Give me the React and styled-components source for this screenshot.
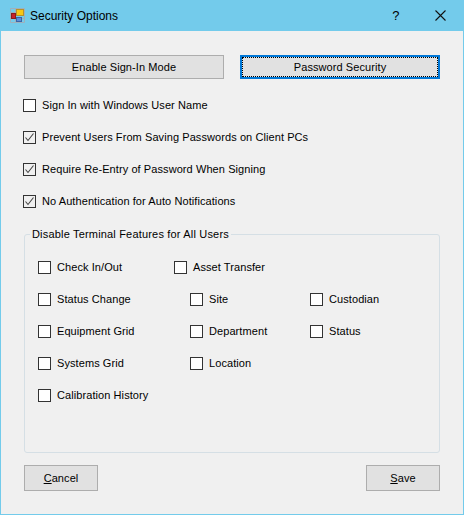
import React from "react";
import styled, { createGlobalStyle } from "styled-components";

const GlobalStyle = createGlobalStyle`
  html, body {
    margin: 0;
    padding: 0;
    background: #f0f0f0;
  }
  body {
    font-family: "Liberation Sans", Arial, sans-serif;
    font-size: 11px;
    letter-spacing: 0.08px;
    color: #000;
  }
`;

const Window = styled.div`
  width: 464px;
  height: 515px;
  box-sizing: border-box;
  border: 1px solid #73cbeb;
  border-top: 0;
  background: #f0f0f0;
  display: flex;
  flex-direction: column;
`;

const TitleBar = styled.div`
  height: 31px;
  flex: none;
  background: #73cbeb;
  display: flex;
  align-items: center;
  padding-left: 9px;
`;

const Title = styled.div`
  margin-left: 4px;
  flex: 1;
  font-size: 12px;
  letter-spacing: 0;
`;

const HelpGlyph = styled.div`
  width: 46px;
  margin-right: -2px;
  text-align: center;
  font-size: 13px;
`;

const CloseBtn = styled.div`
  width: 46px;
  height: 31px;
  display: flex;
  align-items: center;
  justify-content: center;
`;

const Content = styled.div`
  flex: 1;
  padding: 24px 23px 0 22px;
  display: flex;
  flex-direction: column;
`;

const TopButtons = styled.div`
  display: flex;
  gap: 16px;
  padding-left: 1px;
  margin-bottom: 18px;
`;

const Button = styled.div`
  box-sizing: border-box;
  width: ${(p) => p.$w}px;
  height: ${(p) => p.$h}px;
  background: #e1e1e1;
  border: 1px solid #adadad;
  display: flex;
  align-items: center;
  justify-content: center;
  ${(p) =>
    p.$focused &&
    `
    border: 2px solid #0078d7;
    outline: 1px dotted #000;
    outline-offset: -3px;
  `}
`;

const Key = styled.span`
  text-decoration: underline;
`;

const CheckList = styled.div`
  display: flex;
  flex-direction: column;
  gap: 16px;
`;

const CheckRow = styled.div`
  display: flex;
  align-items: center;
  height: 16px;
  white-space: nowrap;
  grid-column: ${(p) => p.$col || "auto"};
`;

const Box = styled.span`
  box-sizing: border-box;
  width: 13px;
  height: 13px;
  flex: none;
  margin-right: 6px;
  border: 1px solid #333;
  background: ${(p) => (p.$checked ? "#f0f0f0" : "#fff")};
  display: flex;
  align-items: center;
  justify-content: center;
`;

const Group = styled.fieldset`
  box-sizing: border-box;
  width: 416px;
  height: 226px;
  margin: 18px 0 0 1px;
  padding: 0 0 0 13px;
  border: 1px solid #d5dfe5;
  border-radius: 3px;
  min-width: 0;
`;

const Legend = styled.legend`
  margin-left: -8px;
  padding: 0 2px;
  line-height: 14px;
  letter-spacing: 0.18px;
`;

const FeatureGrid = styled.div`
  display: grid;
  grid-template-columns: 136px 16px 120px 1fr;
  row-gap: 16px;
  padding-top: 18px;
`;

const BottomButtons = styled.div`
  display: flex;
  justify-content: space-between;
  width: 416px;
  margin: 12px 0 0 1px;
`;

const Check = ({ label, checked, col }) => (
  <CheckRow $col={col}>
    <Box $checked={checked}>
      {checked && (
        <svg width="11" height="11" viewBox="0 0 11 11">
          <path d="M1.5 5.5 L4 8.5 L9.5 1.5" fill="none" stroke="#444" strokeWidth="1.1" />
        </svg>
      )}
    </Box>
    {label}
  </CheckRow>
);

const AppIcon = () => (
  <svg width="16" height="16" viewBox="0 0 16 16">
    <path d="M0.5 0.5 H14.5 V14.5 H0.5 Z M5.5 0.5 V14.5 M0.5 4.5 H14.5 M0.5 10.5 H14.5" fill="none" stroke="#9fb0bb" />
    <rect x="1.5" y="5.5" width="4" height="5" fill="#c8202a" stroke="#8a1c1c" />
    <rect x="6.5" y="1.5" width="7" height="6" fill="#f7c815" stroke="#b8922a" />
    <rect x="6.5" y="9.5" width="5" height="4" fill="#5b8fd9" stroke="#3a64a8" />
  </svg>
);

export default function App() {
  return (
    <>
      <GlobalStyle />
      <Window>
        <TitleBar>
          <AppIcon />
          <Title>Security Options</Title>
          <HelpGlyph>?</HelpGlyph>
          <CloseBtn>
            <svg width="11" height="11" viewBox="0 0 11 11">
              <path d="M0.5 0.5 L10.5 10.5 M10.5 0.5 L0.5 10.5" stroke="#111" strokeWidth="1.1" fill="none" />
            </svg>
          </CloseBtn>
        </TitleBar>
        <Content>
          <TopButtons>
            <Button $w={200} $h={24}>Enable Sign-In Mode</Button>
            <Button $w={200} $h={24} $focused>Password Security</Button>
          </TopButtons>
          <CheckList>
            <Check label="Sign In with Windows User Name" />
            <Check checked label="Prevent Users From Saving Passwords on Client PCs" />
            <Check checked label="Require Re-Entry of Password When Signing" />
            <Check checked label="No Authentication for Auto Notifications" />
          </CheckList>
          <Group>
            <Legend>Disable Terminal Features for All Users</Legend>
            <FeatureGrid>
              <Check label="Check In/Out" col="1" />
              <Check label="Asset Transfer" col="2 / 4" />
              <Check label="Status Change" col="1" />
              <Check label="Site" col="3" />
              <Check label="Custodian" col="4" />
              <Check label="Equipment Grid" col="1" />
              <Check label="Department" col="3" />
              <Check label="Status" col="4" />
              <Check label="Systems Grid" col="1" />
              <Check label="Location" col="3" />
              <Check label="Calibration History" col="1" />
            </FeatureGrid>
          </Group>
          <BottomButtons>
            <Button $w={74} $h={26}><span><Key>C</Key>ancel</span></Button>
            <Button $w={74} $h={26}><span><Key>S</Key>ave</span></Button>
          </BottomButtons>
        </Content>
      </Window>
    </>
  );
}
